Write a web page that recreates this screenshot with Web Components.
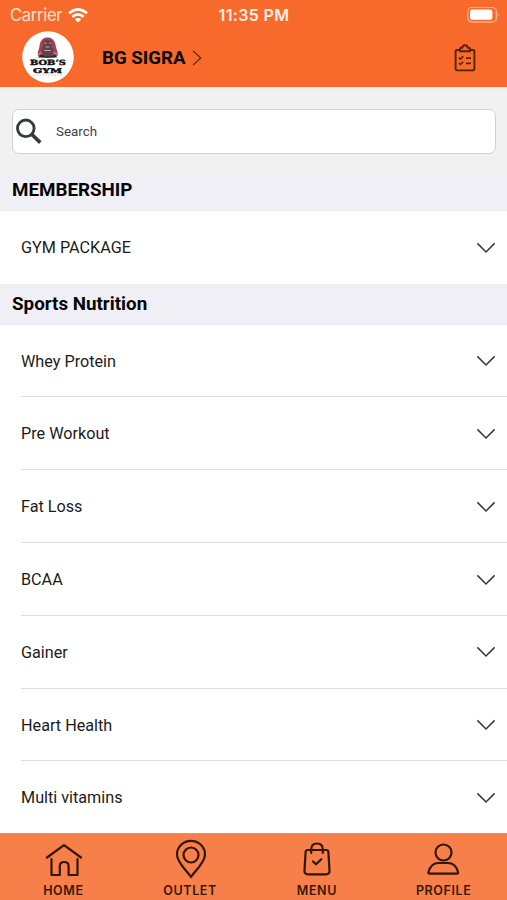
<!DOCTYPE html>
<html lang="en">
<head>
<meta charset="utf-8">
<title>BG Sigra</title>
<style>
html,body{margin:0;height:100%;overflow:hidden;background:#fff}
body{font-family:Roboto,"Liberation Sans",sans-serif;color:#050505}
</style>
</head>
<body>
<gym-app></gym-app>
<script>
const define = (name, html) => customElements.define(name, class extends HTMLElement {
  connectedCallback() {
    if (this.shadowRoot) return;
    const t = document.createElement('template');
    t.innerHTML = html;
    this.attachShadow({mode: 'open'}).append(t.content.cloneNode(true));
  }
});

define('status-bar', `
<style>
:host{display:grid;grid-template-columns:1fr auto 1fr;align-items:center;height:30px;padding:0 9px 0 10px;color:#fff0e6;font:400 16.6px/30px Inter,sans-serif}
.left{display:flex;align-items:center;gap:6px;letter-spacing:-.3px}
.left span{opacity:.88}
.time{font-size:16px;font-weight:600;letter-spacing:.35px}
.battery{justify-self:end;display:block;margin-right:-1px}
svg{display:block}
</style>
<div class="left"><span>Carrier</span><svg width="20" height="15" viewBox="0 0 20 15" fill="none" stroke="#fff" stroke-width="2.8"><path d="M1 5.3Q10-2.5 19 5.3M4.3 8.9Q10 3.9 15.7 8.9"/><path d="M10 14.6L6.8 11.4Q10 8.7 13.2 11.4Z" fill="#fff" stroke="none"/></svg></div>
<div class="time">11:35 PM</div>
<svg class="battery" width="33" height="17" viewBox="0 0 33 17"><rect x="1.800" y=".4" width="28.6" height="14.6" rx="4.3" fill="none" stroke="#fbb08e" stroke-width="1.3"/><rect x="4" y="2.600" width="22.4" height="10.2" rx="2.4" fill="#fff"/><path d="M31.500 5.500q2 2.200 0 4.4z" fill="#fbb08e"/></svg>`);

define('gym-logo', `
<style>:host{display:block;width:52px;height:52px}svg{display:block}text{font-family:"DejaVu Serif",serif;font-weight:700;fill:#171313;stroke:#171313;stroke-width:.45}</style>
<svg width="52" height="52" viewBox="0 0 52 52"><circle cx="26" cy="26" r="25.8" fill="#fff"/>
<path d="M16 25C15 21 17 19 17.4 16C18 9 21 6.500 25.500 6.500S33 9 34 16c.4 3 2.500 5 1.500 9q-10 4-19.500 0z" fill="#a9405a"/>
<path d="M20.500 11q5-5 10 0l-1 4 2 4-1.500 7h-9l-1.500-7 2-4z" fill="#5f434a"/>
<path d="M22 12h2.500M27 12h2.500M23.500 16h4M22 19.500h7M16 23.500l4-2M31.500 21.500l4 2" stroke="#c9a0aa" stroke-width="1"/>
<path d="M15.500 26.500l4-3 3 2h7l3-2 3 3z" fill="#302326"/>
<text y="33.900" font-size="7.200" x="8" textLength="36" lengthAdjust="spacingAndGlyphs">BOB’S</text>
<text y="41.900" font-size="6.600" x="11" textLength="29" lengthAdjust="spacingAndGlyphs">GYM</text>
<path d="M11 44h30" stroke="#c9c9c9" stroke-width=".9" stroke-dasharray="2 1"/></svg>`);

define('app-header', `
<style>
:host{display:block;height:87px;background:#f86a2b}
.bar{display:flex;align-items:center;height:52px;padding:1px 31px 0 22px}
.name{margin-left:28px;font-size:18.700px;font-weight:700;line-height:24px;padding-top:1px;white-space:nowrap}
.arrow{margin-left:6px;flex:1;padding-top:1px}
svg{display:block}
</style>
<status-bar></status-bar>
<div class="bar"><gym-logo></gym-logo><div class="name"><slot></slot></div>
<div class="arrow"><svg width="10" height="18" viewBox="0 0 10 18" fill="none" stroke="#562309" stroke-width="1.100"><path d="M1 1.800L8.800 9 1 16.200"/></svg></div>
<svg width="22" height="28" viewBox="0 0 22 28" style="margin-top:2px" fill="none" stroke="#562309" stroke-width="1.900" stroke-linejoin="round"><path d="M6 6H3Q1.600 6 1.600 7.400V24.500Q1.600 26.400 3.500 26.400H18.500Q20.400 26.400 20.400 24.500V7.400Q20.400 6 19 6H16"/><path d="M6 7.300V4.600Q6 3.800 7 3.800H8.300Q8.500 1.300 11 1.300T13.700 3.800H15Q16 3.800 16 4.600V7.300Z"/><path d="M4.800 13.600L6.500 15.100 9.300 12.300M12 14.100H17M4.800 19L6.500 20.500 9.300 17.700M12 19.400H17" stroke-width="1.600"/></svg></div>`);

define('search-field', `
<style>
:host{box-sizing:border-box;display:block;background:#f1f1f1;height:82px;padding:22px 11px 0 12px}
.box{box-sizing:border-box;display:flex;align-items:center;height:45px;border:1.500px solid #d2d2d2;border-radius:7px;background:#fff;padding-left:3px;font-size:13.350px;color:#424242}
svg{display:block;margin:0 14px 0 -1px}
</style>
<div class="box"><svg width="27" height="27" viewBox="0 0 27 27" fill="none" stroke="#373b3d"><circle cx="10.800" cy="10.300" r="8.300" stroke-width="2.900"/><path d="M16.200 15.700L25.300 24.600" stroke-width="3.700"/></svg><slot></slot></div>`);

define('section-title', `
<style>:host{box-sizing:border-box;display:flex;align-items:center;height:40.800px;padding:0 12px 1px;background:#f0eff5;font-size:18.800px;font-weight:700;line-height:24px}</style><slot></slot>`);

define('menu-row', `
<style>
:host{display:block;padding-left:21px;background:#fff}
.row{box-sizing:border-box;display:flex;align-items:center;justify-content:space-between;height:72.800px;padding:1.400px 11px 0 0;font-size:16.200px;color:#1c1c1c;border-bottom:var(--rule,1.500px solid #dedede)}
svg{display:block}
</style>
<div class="row"><slot></slot><svg width="20" height="12" viewBox="0 0 20 12" fill="none" stroke="#393939" stroke-width="1.500"><path d="M1.400 1.400L10 10 18.600 1.400"/></svg></div>`);

define('tab-item', `
<style>:host{display:flex;flex-direction:column;align-items:center;color:#3a1809;font:600 12.500px/16px Inter,sans-serif;letter-spacing:.6px}
.i{height:48.500px;padding-top:1px;box-sizing:border-box;display:flex;align-items:center}::slotted(svg){display:block}</style>
<div class="i"><slot name="icon"></slot></div><div class="t"><slot></slot></div>`);

define('tab-bar', `
<style>
:host{box-sizing:border-box;display:grid;grid-template-columns:repeat(4,1fr);height:67px;background:#f77f49;border-top:1px solid #c9987f}
svg{fill:none;stroke:#321609;stroke-width:2.200;stroke-linejoin:round;stroke-linecap:round}
</style>
<tab-item><svg slot="icon" width="38" height="38" viewBox="0 0 38 38"><path d="M3 17.500L20 5.200 37 17.500M7.500 19V35H15.800V26Q15.800 22 20.200 22T24.600 26V35H33.500V19"/></svg>HOME</tab-item>
<tab-item><svg slot="icon" width="32" height="40" viewBox="0 0 32 40"><path d="M17 38C14 33 3 24 3 15.500A14 13.700 0 0 1 31 15.500C31 24 20 33 17 38Z"/><circle cx="17" cy="16" r="7.500"/></svg>OUTLET</tab-item>
<tab-item><svg slot="icon" width="28" height="36" viewBox="0 0 28 36"><path d="M4.500 9H23.500Q25.200 9 25.400 11L26.500 29.500Q26.700 33.300 23 33.300H5Q1.300 33.300 1.500 29.500L2.600 11Q2.800 9 4.500 9ZM8.200 12V8.500Q8.200 2.500 14 2.500T19.800 8.500V12"/><path d="M10 20.500L13 23.300 18.300 18.200"/></svg>MENU</tab-item>
<tab-item><svg slot="icon" width="34" height="36" viewBox="0 0 34 36"><circle cx="16.500" cy="11.500" r="8"/><path d="M2.500 32.700Q1 32.700 1.500 31Q4 22 11.500 22H21Q28.500 22 31 31Q31.500 32.700 30 32.700Z"/></svg>PROFILE</tab-item>`);

define('gym-app', `
<style>
:host{display:flex;flex-direction:column;height:900px;width:100%;overflow:hidden}
main{flex:1;min-height:0;overflow:hidden}
section-title.first{height:42px;background:linear-gradient(#f1f1f1,#f0eff5 8px)}
menu-row.last{--rule:1px solid transparent}
</style>
<app-header>BG SIGRA</app-header>
<main>
<search-field>Search</search-field>
<section-title class="first">MEMBERSHIP</section-title>
<menu-row class="last">GYM PACKAGE</menu-row>
<section-title>Sports Nutrition</section-title>
<menu-row>Whey Protein</menu-row><menu-row>Pre Workout</menu-row><menu-row>Fat Loss</menu-row><menu-row>BCAA</menu-row><menu-row>Gainer</menu-row><menu-row>Heart Health</menu-row><menu-row class="last">Multi vitamins</menu-row>
</main>
<tab-bar></tab-bar>`);
</script>
</body>
</html>
